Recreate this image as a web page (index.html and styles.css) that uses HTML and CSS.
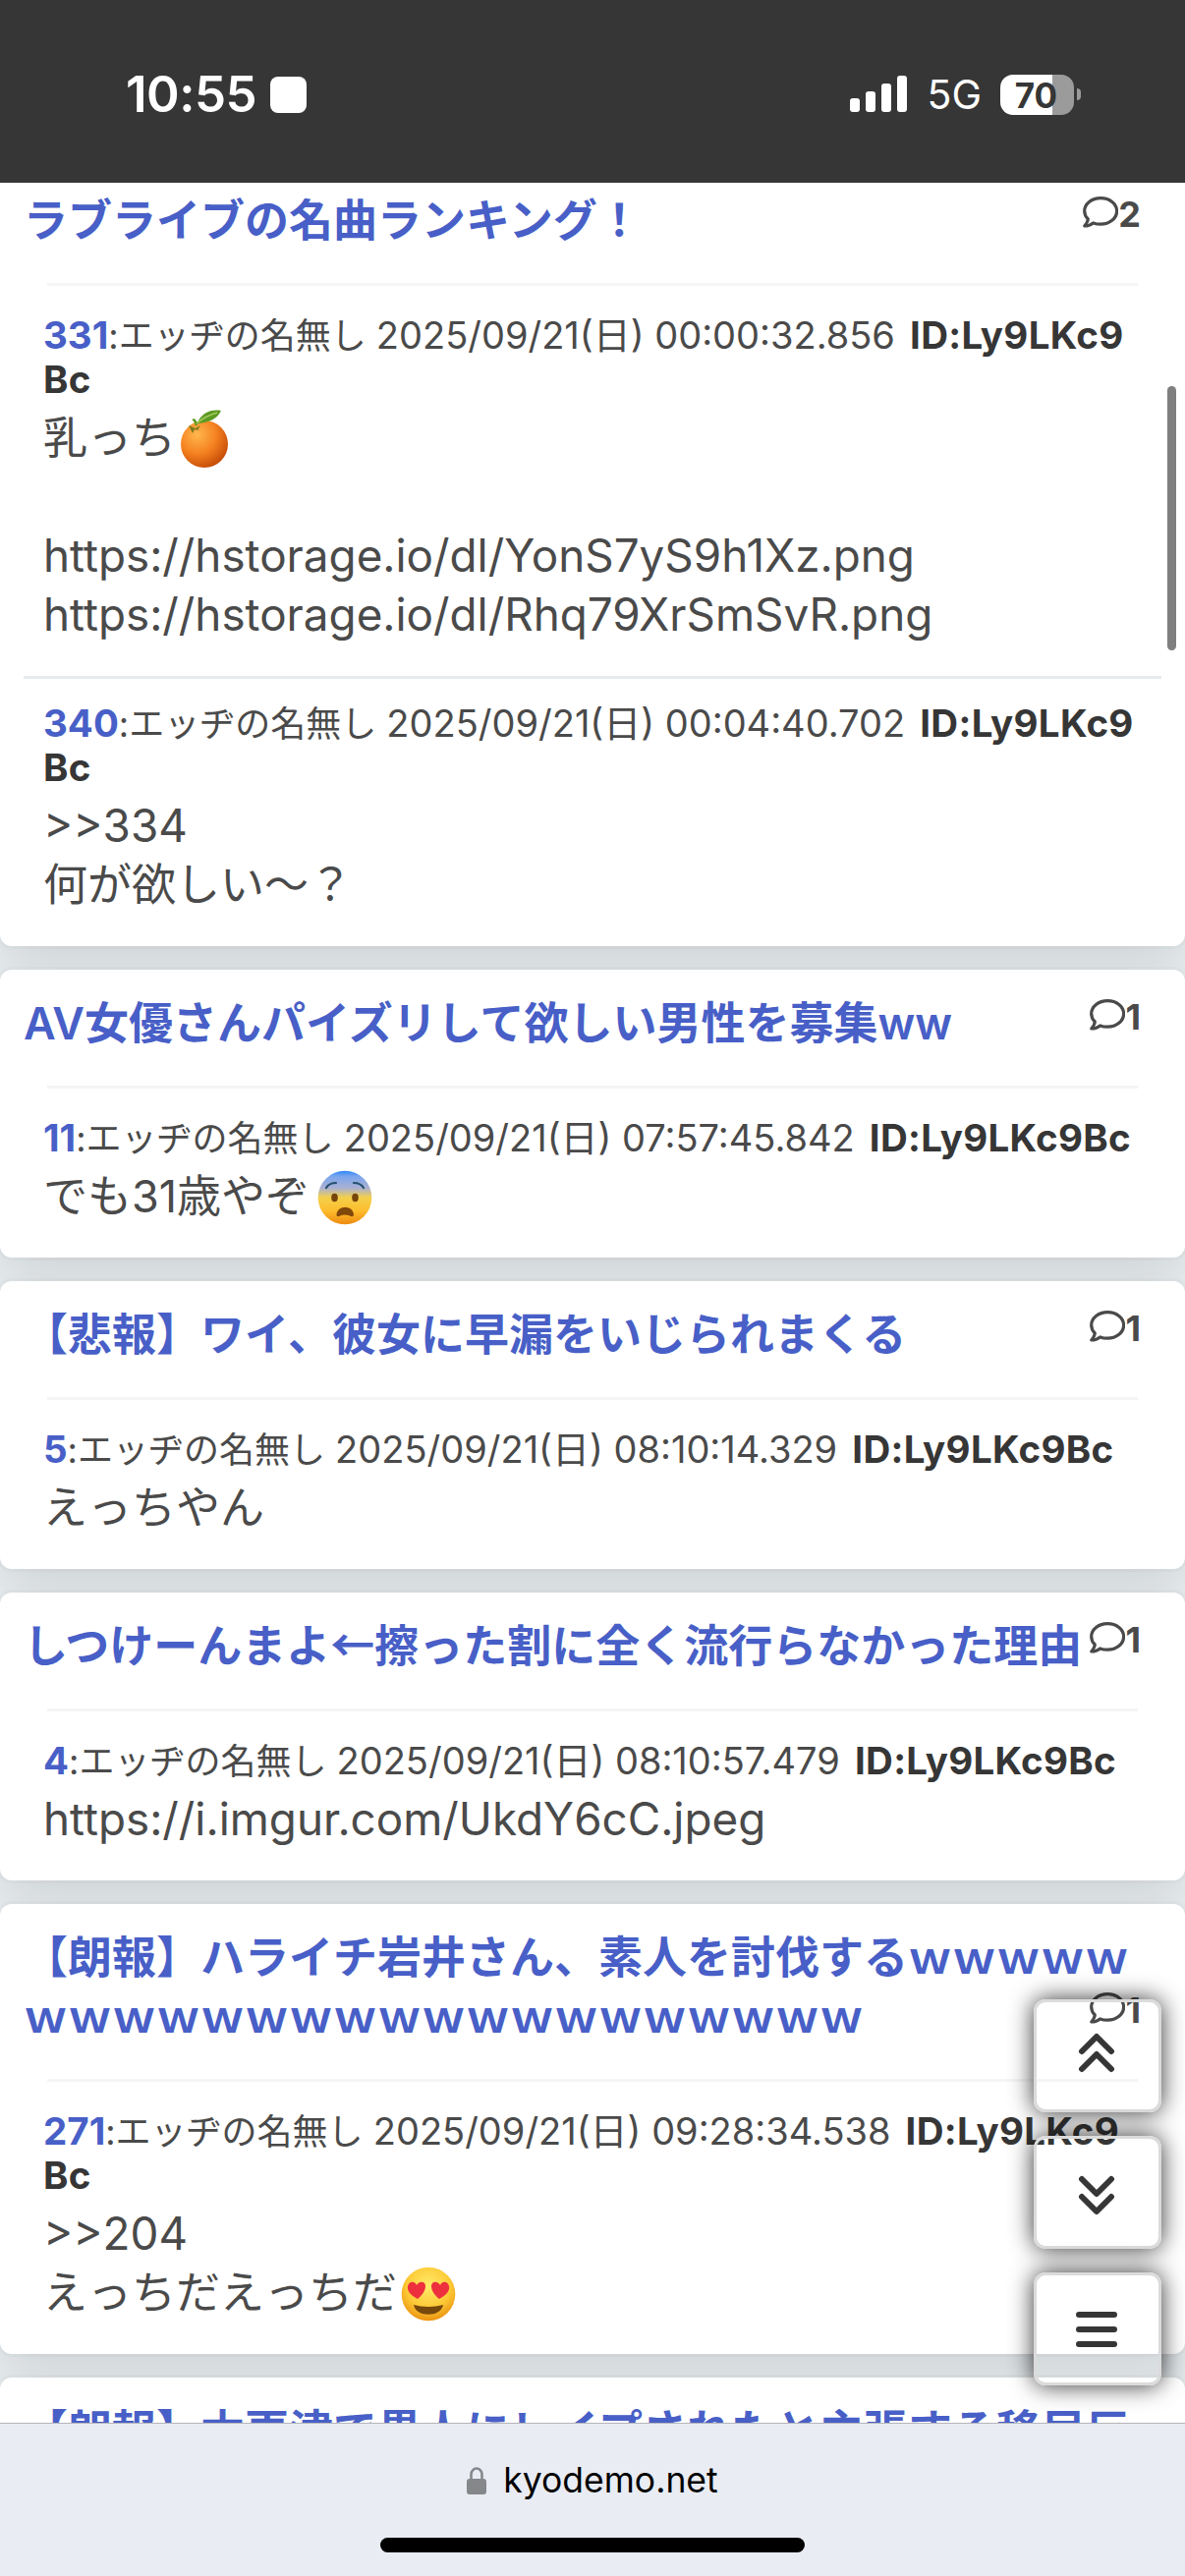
FILE: index.html
```
<!DOCTYPE html>
<html lang="ja">
<head>
    <meta charset="UTF-8">
    <meta name="viewport" content="width=device-width, initial-scale=1.0">
    <title>kyodemo.net</title>
    <link rel="stylesheet" href="styles.css">
</head>
<body>
    <svg class="defs" width="0" height="0">
        <symbol id="comment" viewBox="0 0 36 32">
            <path d="M18.200 1.600C9 1.600 1.700 7.500 1.700 14.800c0 3.200 1.300 6 3.600 8.200-.2 2.600-1.700 4.800-3.500 7 3.500.1 6.400-1.200 8.800-3.100 2.300.9 4.900 1.300 7.600 1.300 9.100 0 16.400-6 16.400-13.400S27.300 1.600 18.200 1.600z" fill="none" stroke="currentColor" stroke-width="3.200" stroke-linejoin="round"/>
        </symbol>
    </svg>

    <div class="status-bar">
        <div class="clock">10:55 <span class="stop"></span></div>
        <div class="indicators">
            <svg class="signal" width="58" height="38" viewBox="0 0 58 38" fill="#fff">
                <rect x="0" y="23" width="10" height="14" rx="3"/>
                <rect x="16" y="16" width="10" height="21" rx="3"/>
                <rect x="32" y="8" width="10" height="29" rx="3"/>
                <rect x="48" y="0" width="10" height="37" rx="3"/>
            </svg>
            <span class="network">5G</span>
            <span class="battery">70</span>
            <span class="battery-tip"></span>
        </div>
    </div>

    <main class="threads">
        <div class="card">
            <div class="card-head">
                <a class="title">ラブライブの名曲ランキング！</a>
                <span class="count"><svg><use href="#comment"/></svg>2</span>
            </div>
            <div class="post">
                <div class="meta"><b class="num">331</b>:エッヂの名無し <span class="date">2025/09/21(日) 00:00:32.856</span> <b class="id">ID:Ly9LKc9<br>Bc</b></div>
                <div class="text">乳っち<svg class="emoji fruit" viewBox="0 0 57 60">
                    <defs>
                        <radialGradient id="orange" cx=".35" cy=".3" r=".8">
                            <stop offset="0" stop-color="#ffb74e"/>
                            <stop offset=".5" stop-color="#f58220"/>
                            <stop offset="1" stop-color="#bd4304"/>
                        </radialGradient>
                    </defs>
                    <circle cx="30" cy="36" r="24" fill="url(#orange)"/>
                    <path d="M21 18c-1-4-2-6-4-7l3-1 3 4c4-9 13-14 24-12-4 9-13 12-23 13z" fill="#5d9a25"/>
                    <path d="M22 15C29 9 36 6 43 4" fill="none" stroke="#a3cb5c" stroke-width="1.500"/>
                    <path d="M14 17l7 3 5-3-3 5-3-1-2 4z" fill="#7a7a1c"/>
                </svg><br><br><span class="url">https://hstorage.io/dl/YonS7yS9h1Xz.png</span><br><span class="url">https://hstorage.io/dl/Rhq79XrSmSvR.png</span></div>
            </div>
            <div class="post">
                <div class="meta"><b class="num">340</b>:エッヂの名無し <span class="date">2025/09/21(日) 00:04:40.702</span> <b class="id">ID:Ly9LKc9<br>Bc</b></div>
                <div class="text"><span class="url">&gt;&gt;334</span><br>何が欲しい〜？</div>
            </div>
        </div>

        <div class="card">
            <div class="card-head">
                <a class="title">AV女優さんパイズリして欲しい男性を募集ww</a>
                <span class="count"><svg><use href="#comment"/></svg>1</span>
            </div>
            <div class="post">
                <div class="meta"><b class="num">11</b>:エッヂの名無し <span class="date">2025/09/21(日) 07:57:45.842</span> <b class="id">ID:Ly9LKc9Bc</b></div>
                <div class="text">でも31歳やぞ<svg class="emoji fear" viewBox="0 0 57 60">
                    <defs>
                        <linearGradient id="fear" x1="0" y1="0" x2="0" y2="1">
                            <stop offset="0" stop-color="#2b86f8"/>
                            <stop offset=".1" stop-color="#79a5ee"/>
                            <stop offset=".32" stop-color="#aab0d2"/>
                            <stop offset=".5" stop-color="#f3d04b"/>
                            <stop offset=".75" stop-color="#fdbc2c"/>
                            <stop offset="1" stop-color="#ee8a10"/>
                        </linearGradient>
                    </defs>
                    <circle cx="29" cy="31" r="27.300" fill="url(#fear)"/>
                    <path d="M10 21q3-5 10-5M38 16q7 0 10 5" fill="none" stroke="#24516b" stroke-width="2.200" stroke-linecap="round"/>
                    <ellipse cx="18.500" cy="31" rx="3.300" ry="4.200" fill="#75450b"/>
                    <ellipse cx="39.500" cy="31" rx="3.300" ry="4.200" fill="#75450b"/>
                    <path d="M20.500 49c0-11 17.500-11 17.500 0q-1 2-4 .5-5-2-10 0-3 1.500-3.500-.5z" fill="#80480a"/>
                </svg></div>
            </div>
        </div>

        <div class="card">
            <div class="card-head">
                <a class="title">【悲報】ワイ、彼女に早漏をいじられまくる</a>
                <span class="count"><svg><use href="#comment"/></svg>1</span>
            </div>
            <div class="post">
                <div class="meta"><b class="num">5</b>:エッヂの名無し <span class="date">2025/09/21(日) 08:10:14.329</span> <b class="id">ID:Ly9LKc9Bc</b></div>
                <div class="text">えっちやん</div>
            </div>
        </div>

        <div class="card">
            <div class="card-head">
                <a class="title">しつけーんまよ<span class="wide">←</span>擦った割に全く流行らなかった理由</a>
                <span class="count"><svg><use href="#comment"/></svg>1</span>
            </div>
            <div class="post">
                <div class="meta"><b class="num">4</b>:エッヂの名無し <span class="date">2025/09/21(日) 08:10:57.479</span> <b class="id">ID:Ly9LKc9Bc</b></div>
                <div class="text"><span class="url">https://i.imgur.com/UkdY6cC.jpeg</span></div>
            </div>
        </div>

        <div class="card">
            <div class="card-head">
                <a class="title">【朗報】ハライチ岩井さん、素人を討伐するｗｗｗｗｗｗｗｗｗｗｗｗｗｗｗｗｗｗｗｗｗｗｗｗ</a>
                <span class="count"><svg><use href="#comment"/></svg>1</span>
            </div>
            <div class="post">
                <div class="meta"><b class="num">271</b>:エッヂの名無し <span class="date">2025/09/21(日) 09:28:34.538</span> <b class="id">ID:Ly9LKc9<br>Bc</b></div>
                <div class="text"><span class="url">&gt;&gt;204</span><br>えっちだえっちだ<svg class="emoji" viewBox="0 0 57 60">
                    <defs>
                        <radialGradient id="love" cx=".5" cy=".35" r=".68">
                            <stop offset="0" stop-color="#ffec6b"/>
                            <stop offset=".6" stop-color="#fdca36"/>
                            <stop offset="1" stop-color="#e98d0c"/>
                        </radialGradient>
                    </defs>
                    <circle cx="29" cy="31" r="27.300" fill="url(#love)"/>
                    <path d="M18 36c-7-4-11-8-10-13 1-5 7-6 9-1 3-5 9-4 9 1 0 4-3 9-8 13zM40 36c7-4 11-8 10-13-1-5-7-6-9-1-3-5-9-4-9 1 0 4 3 9 8 13z" fill="#ee2f3d"/>
                    <path d="M14 42q15 4 30 0c-2 13-28 13-30 0z" fill="#76480c"/>
                </svg></div>
            </div>
        </div>

        <div class="card">
            <div class="card-head">
                <a class="title">【朗報】木更津で黒人にレイプされたと主張する移民反</a>
            </div>
        </div>
    </main>

    <div class="scrollbar"></div>

    <nav class="float-menu">
        <button class="float-btn up">
            <svg width="42" height="42" viewBox="0 0 42 42"><path d="M6 19L21 4l15 15M6 37l15-15 15 15"/></svg>
        </button>
        <button class="float-btn down">
            <svg width="42" height="42" viewBox="0 0 42 42"><path d="M6 5l15 15L36 5M6 23l15 15 15-15"/></svg>
        </button>
        <button class="float-btn">
            <svg width="42" height="42" viewBox="0 0 42 42"><path d="M3 6h36M3 21h36M3 36h36"/></svg>
        </button>
    </nav>

    <footer class="browser-bar">
        <div class="address">
            <svg width="20" height="28" viewBox="0 0 20 28">
                <path d="M4.500 13V7.500a5.500 6 0 0 1 11 0V13" fill="none" stroke="#86878b" stroke-width="2.600"/>
                <rect x="0" y="12" width="20" height="16" rx="3" fill="#86878b"/>
            </svg>
            <span>kyodemo.net</span>
        </div>
        <div class="home-indicator"></div>
    </footer>
</body>
</html>
```

FILE: styles.css
```
* {
    box-sizing: border-box;
}

body {
    margin: 0;
    height: 2622px;
    overflow: hidden;
    position: relative;
    display: flex;
    flex-direction: column;
    background: #e6ebee;
    color: #4a4a4a;
    font-family: Inter, "Noto Sans CJK JP", sans-serif;
    font-size: 45px;
    line-height: 60px;
}

.defs {
    position: absolute;
}

/* status bar */
.status-bar {
    position: relative;
    z-index: 2;
    flex: none;
    height: 186px;
    padding: 66px 106px 0 128px;
    display: flex;
    justify-content: space-between;
    background: #363636;
    color: #ffffff;
}

.clock {
    display: flex;
    align-items: center;
    height: 60px;
    gap: 14px;
    font-size: 51px;
    font-weight: 600;
    letter-spacing: -0.5px;
}

.stop {
    width: 37px;
    height: 37px;
    border-radius: 8px;
    background: #ffffff;
}

.indicators {
    display: flex;
    align-items: center;
    height: 60px;
}

.network {
    margin: 0 19px 0 20px;
    font-size: 41px;
}

.battery {
    width: 75px;
    height: 41px;
    border-radius: 13px;
    background: linear-gradient(to right, #ffffff 53px, #9b9b9b 53px);
    color: #363636;
    font-size: 35px;
    font-weight: 700;
    line-height: 42px;
    text-align: center;
    padding-right: 2px;
}

.battery-tip {
    width: 4px;
    height: 12px;
    margin-left: 3px;
    border-radius: 0 4px 4px 0;
    background: #9b9b9b;
}

/* thread list */
.threads {
    flex: 1;
    min-height: 0;
    margin-top: -16px;
    display: flex;
    flex-direction: column;
    gap: 24px;
    overflow: hidden;
}

.card {
    flex: none;
    background: #ffffff;
    border-radius: 12px;
    box-shadow: 0 24px 48px -6px rgba(10, 10, 10, 0.1), 0 0 0 3px rgba(10, 10, 10, 0.02);
}

.card-head {
    position: relative;
    padding: 25px 24px 32.5px;
}

.card-head::after {
    content: "";
    display: block;
    position: absolute;
    left: 48px;
    right: 48px;
    bottom: -3px;
    height: 3px;
    background: #f5f5f5;
}

.title {
    display: block;
    color: #485fc7;
    font-weight: 600;
    word-break: break-all;
}

.wide {
    font-family: "Noto Sans CJK JP", sans-serif;
    line-height: 1;
}

.count {
    position: absolute;
    right: 45px;
    bottom: 40px;
    display: flex;
    align-items: center;
    font-size: 36px;
    font-weight: 700;
}

.count svg {
    width: 36px;
    height: 32px;
    margin-bottom: 3px;
}

.post {
    padding: 32px 44px 32.5px;
}

.post + .post {
    margin: 0 24px;
    padding: 24px 20px 32px;
    border-top: 3px solid #e6eaee;
}

.meta {
    font-size: 36px;
    line-height: 45px;
    white-space: nowrap;
    margin-bottom: 6px;
}

.num,
.date,
.id {
    line-height: 1;
}

.num {
    color: #485fc7;
    font-size: 38.5px;
}

.date {
    font-size: 38px;
}

.id {
    margin-left: 5px;
    color: #363636;
    font-size: 38.5px;
    letter-spacing: 0.3px;
}

.url {
    font-size: 45.8px;
    line-height: 1;
}

.emoji {
    width: 57px;
    height: 60px;
    margin-left: 3px;
    vertical-align: top;
}

.fruit {
    margin-left: -1px;
}

.fear {
    margin-left: 7px;
}

/* overlays */
.scrollbar {
    position: absolute;
    top: 393px;
    right: 9px;
    width: 9px;
    height: 269px;
    border-radius: 5px;
    background: #7f7f7f;
}

.float-menu {
    position: absolute;
    right: 24px;
    bottom: 194px;
    display: flex;
    flex-direction: column;
    gap: 24px;
}

.float-btn {
    width: 130px;
    height: 115px;
    padding: 0 2px 0 0;
    display: flex;
    align-items: center;
    justify-content: center;
    background: transparent;
    border: 3px solid #dbdbdb;
    border-radius: 12px;
    box-shadow: 0 0 24px rgba(0, 0, 0, 0.8);
}

.float-btn path {
    fill: none;
    stroke: #363636;
    stroke-width: 6;
    stroke-linecap: round;
    stroke-linejoin: round;
}

.up {
    padding-bottom: 5px;
}

.down {
    padding-top: 4px;
}

/* browser bar */
.browser-bar {
    position: relative;
    flex: none;
    height: 156px;
    padding-top: 28px;
    display: flex;
    flex-direction: column;
    align-items: center;
    background: #e9ecf3;
    border-top: 1px solid #b3b5ba;
    color: #000000;
}

.address {
    display: flex;
    align-items: center;
    gap: 17px;
    font-size: 35.5px;
}

.home-indicator {
    width: 432px;
    height: 15px;
    margin-top: 28px;
    border-radius: 8px;
    background: #000000;
}
```
